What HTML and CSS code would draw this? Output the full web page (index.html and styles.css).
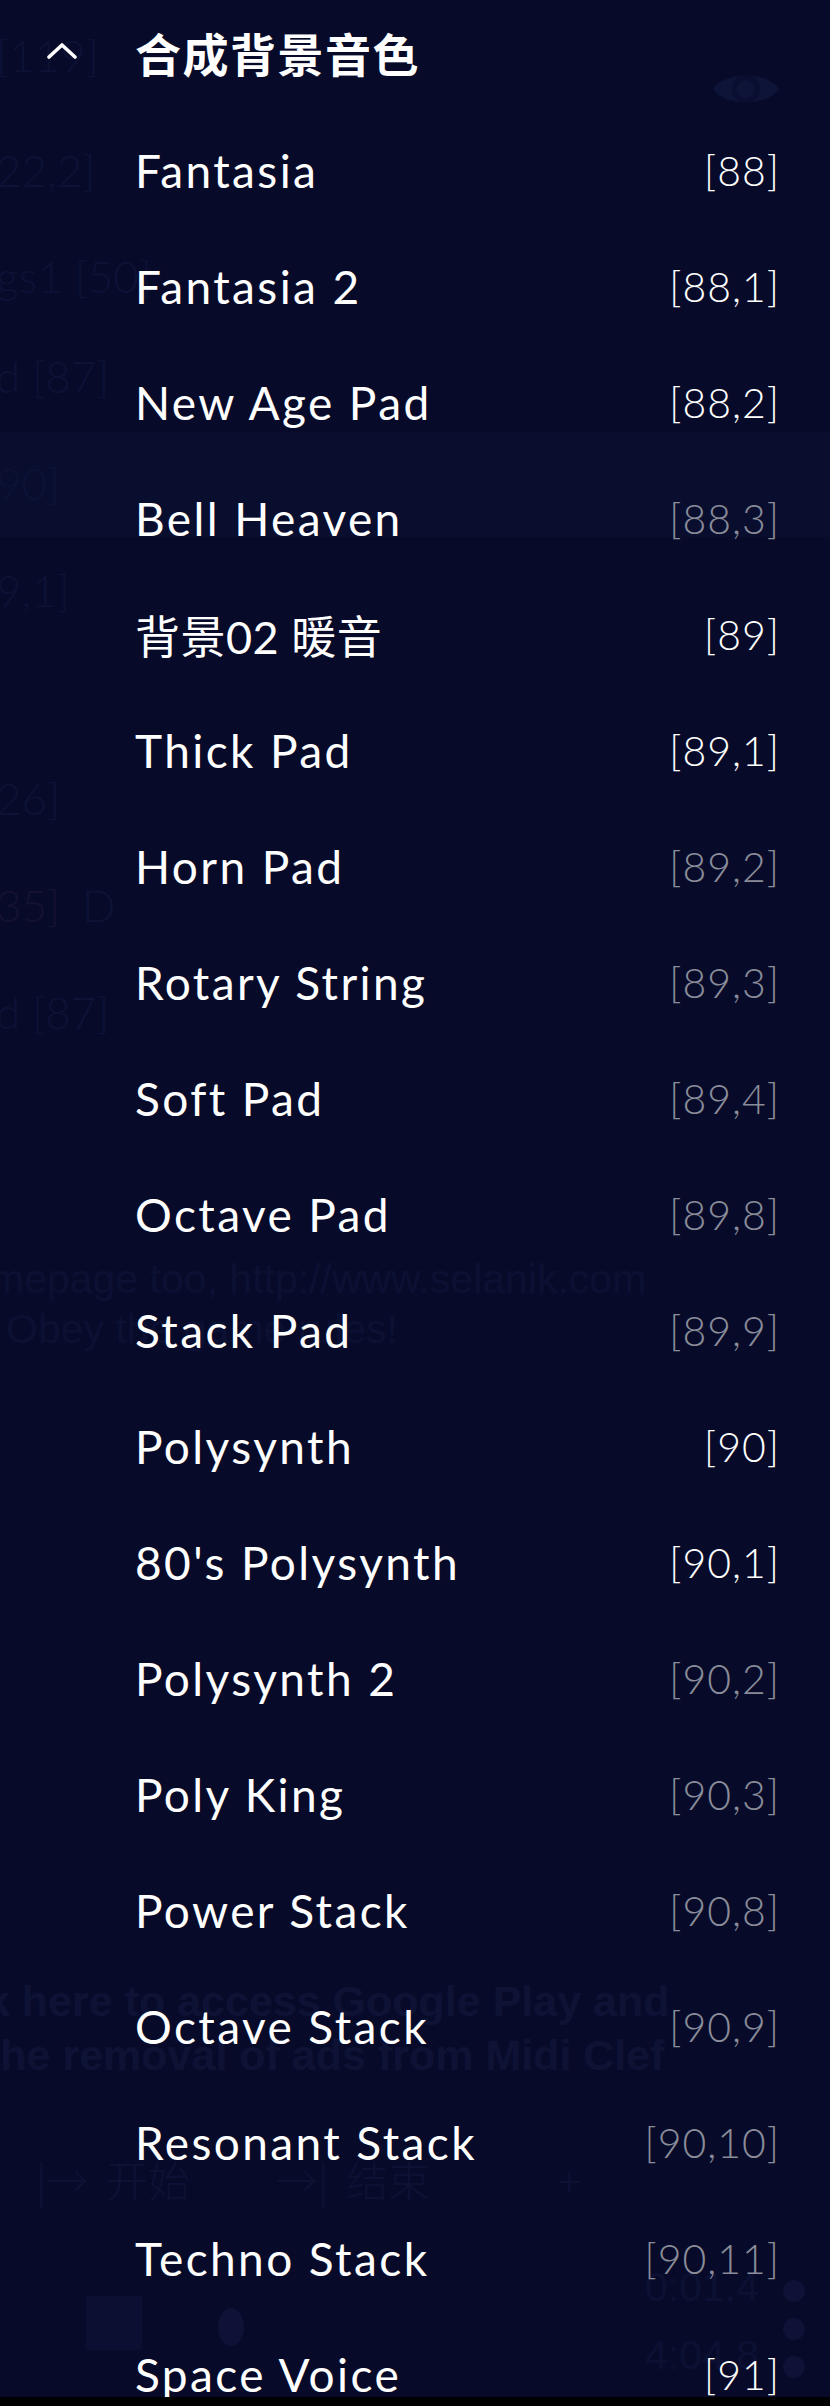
FILE: index.html
```html
<!DOCTYPE html>
<html lang="zh">
<head>
<meta charset="utf-8">
<title>合成背景音色</title>
<link rel="stylesheet" href="styles.css">
</head>
<body>
<div class="screen">
  <div class="ghost" aria-hidden="true">
    <div class="g-band"></div>
    <span class="g-text g-l" style="top:22px">[119]</span>
    <span class="g-text g-l" style="top:137px">22,2]</span>
    <span class="g-text g-l" style="top:243px">gs1 [50]</span>
    <span class="g-text g-l" style="top:343px">d [87]</span>
    <span class="g-text g-l" style="top:450px">90]</span>
    <span class="g-text g-l" style="top:557px">9,1]</span>
    <span class="g-text g-l" style="top:765px">26]</span>
    <span class="g-text g-l g-red" style="top:872px">35] <span class="g-d">D</span></span>
    <span class="g-text g-l" style="top:979px">d [87]</span>
    <span class="g-small" style="top:1254px">mepage too, http://www.selanik.com</span>
    <span class="g-small" style="top:1304px;left:6px">Obey the game rules!</span>
    <span class="g-bold" style="top:1974px">k here to access Google Play and</span>
    <span class="g-bold" style="top:2028px">the removal of ads from Midi Clef</span>
    <span class="g-small g-tool" style="top:2154px;left:36px">|→</span>
    <span class="g-small g-tool" style="top:2154px;left:106px">开始</span>
    <span class="g-small g-tool" style="top:2154px;left:276px">→|</span>
    <span class="g-small g-tool" style="top:2154px;left:346px">结束</span>
    <span class="g-small g-tool" style="top:2154px;left:558px">+</span>
    <span class="g-small" style="top:2262px;left:645px">0:01.4</span>
    <span class="g-small" style="top:2330px;left:645px">4:04.8</span>
    <span class="g-box"></span>
    <span class="g-dot" style="top:2308px;left:218px;width:26px;height:38px"></span>
    <span class="g-dot" style="top:2280px;left:783px"></span>
    <span class="g-dot" style="top:2318px;left:783px"></span>
    <span class="g-dot" style="top:2356px;left:783px"></span>
    <svg class="g-eye" viewBox="0 0 66 44"><path d="M0 22 C12 4 54 4 66 22 C54 40 12 40 0 22 Z" fill="#0e1437"/><circle cx="33" cy="22" r="14" fill="#0a0f31"/><circle cx="33" cy="22" r="9" fill="#0e1437"/></svg>
  </div>

  <div class="sheet">
    <div class="sheet-head">
      <svg class="chevron" viewBox="0 0 30 16"><path d="M2 14 L15 2 L28 14" fill="none" stroke="#ffffff" stroke-width="3.6" stroke-linecap="round" stroke-linejoin="round"/></svg>
      <span class="head-title">合成背景音色</span>
    </div>
    <ul class="list">
      <li class="row"><span class="name">Fantasia</span><span class="num">[88]</span></li>
      <li class="row"><span class="name">Fantasia 2</span><span class="num">[88,1]</span></li>
      <li class="row"><span class="name">New Age Pad</span><span class="num">[88,2]</span></li>
      <li class="row"><span class="name">Bell Heaven</span><span class="num dim">[88,3]</span></li>
      <li class="row"><span class="name cjk">背景02 暖音</span><span class="num">[89]</span></li>
      <li class="row"><span class="name">Thick Pad</span><span class="num">[89,1]</span></li>
      <li class="row"><span class="name">Horn Pad</span><span class="num dim">[89,2]</span></li>
      <li class="row"><span class="name">Rotary String</span><span class="num dim">[89,3]</span></li>
      <li class="row"><span class="name">Soft Pad</span><span class="num dim">[89,4]</span></li>
      <li class="row"><span class="name">Octave Pad</span><span class="num dim">[89,8]</span></li>
      <li class="row"><span class="name">Stack Pad</span><span class="num dim">[89,9]</span></li>
      <li class="row"><span class="name">Polysynth</span><span class="num">[90]</span></li>
      <li class="row"><span class="name">80's Polysynth</span><span class="num">[90,1]</span></li>
      <li class="row"><span class="name">Polysynth 2</span><span class="num dim">[90,2]</span></li>
      <li class="row"><span class="name">Poly King</span><span class="num dim">[90,3]</span></li>
      <li class="row"><span class="name">Power Stack</span><span class="num dim">[90,8]</span></li>
      <li class="row"><span class="name">Octave Stack</span><span class="num dim">[90,9]</span></li>
      <li class="row"><span class="name">Resonant Stack</span><span class="num dim">[90,10]</span></li>
      <li class="row"><span class="name">Techno Stack</span><span class="num dim">[90,11]</span></li>
      <li class="row"><span class="name">Space Voice</span><span class="num">[91]</span></li>
    </ul>
  </div>
  <div class="navbar"></div>
</div>
</body>
</html>
```
FILE: styles.css
```css
* { box-sizing: border-box; }
html, body { margin: 0; padding: 0; background: #070b29; }
.screen {
  position: relative;
  width: 830px;
  height: 2406px;
  overflow: hidden;
  background: #070b29;
  display: flex;
  flex-direction: column;
  font-family: Lato, "Noto Sans CJK SC", sans-serif;
}

/* faint app content behind the dimming overlay */
.ghost { position: absolute; inset: 0; z-index: 0; }
.g-band { position: absolute; left: 0; right: 0; top: 432px; height: 105px; background: #090e2f; }
.g-text { position: absolute; left: -4px; font-size: 44px; font-weight: 300; color: #0d1236; line-height: 66px; white-space: nowrap; }
.g-red { color: #151131; }
.g-d { color: #0e1336; margin-left: 10px; }
.g-small { position: absolute; left: -10px; font-size: 41px; font-weight: 400; color: #0c1134; line-height: 50px; white-space: nowrap; font-family: "Liberation Sans Narrow", "Liberation Sans", "Noto Sans CJK SC", sans-serif; }
.g-tool { font-size: 42px; color: #0d1235; font-family: "Noto Sans CJK SC", sans-serif; font-weight: 300; }
.g-bold { position: absolute; left: -14px; font-size: 43px; font-weight: 700; color: #0e1336; line-height: 54px; white-space: nowrap; font-family: "Liberation Sans Narrow", "Liberation Sans", sans-serif; }
.g-box { position: absolute; left: 86px; top: 2296px; width: 56px; height: 54px; background: #0b1033; }
.g-dot { position: absolute; width: 22px; height: 22px; border-radius: 50%; background: #0d1236; }
.g-eye { position: absolute; left: 713px; top: 67px; width: 66px; height: 44px; }

.sheet {
  position: relative;
  z-index: 1;
  height: 2397px;
  overflow: hidden;
  flex: none;
}
.sheet-head {
  height: 112px;
  display: flex;
  align-items: center;
  padding-left: 47px;
  padding-bottom: 8px;
}
.chevron { width: 30px; height: 16px; margin-right: 58px; margin-top: -2px; }
.head-title {
  font-family: "Noto Sans CJK SC", sans-serif;
  font-weight: 700;
  font-size: 46px;
  color: #ffffff;
  letter-spacing: 1.5px;
}
.list { list-style: none; margin: 0; padding: 0; }
.row {
  height: 116px;
  display: flex;
  align-items: center;
  justify-content: space-between;
  padding: 0 50px 0 135px;
}
.name {
  font-size: 46px;
  letter-spacing: 2.4px;
  color: #ffffff;
  font-weight: 400;
  white-space: nowrap;
}
.name.cjk { letter-spacing: 0.5px; font-size: 45px; }
.num {
  font-size: 41px;
  letter-spacing: 1px;
  font-weight: 300;
  color: #ffffff;
  white-space: nowrap;
}
.num.dim { color: #8a8c99; }
.navbar { flex: 1; background: #000000; position: relative; z-index: 1; }
```
